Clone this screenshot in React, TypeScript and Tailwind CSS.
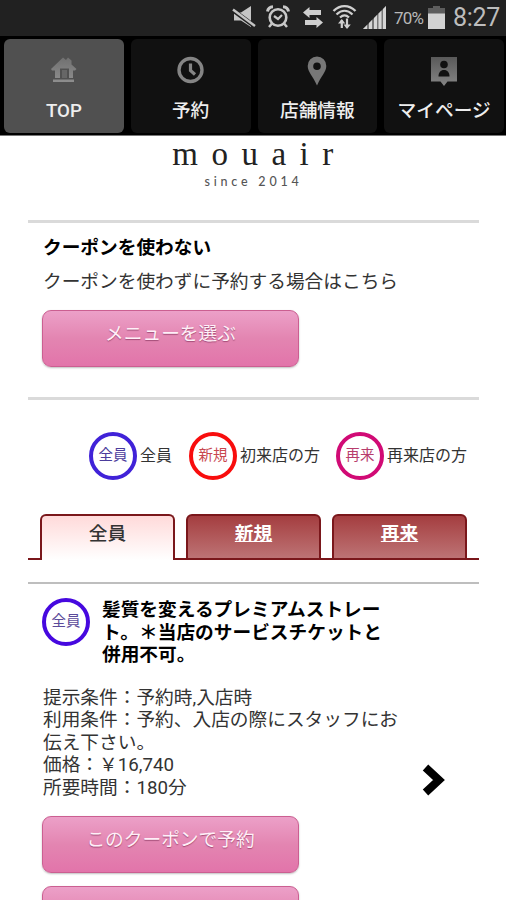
import type { ReactNode } from "react";
import clsx from "clsx";

type NavItemProps = {
  label: string;
  icon: ReactNode;
  active?: boolean;
};

const MuteIcon = () => (
  <svg width="24" height="24" viewBox="0 0 24 24">
    <path d="M2 7.500h7L19 1v21l-10-6.500H2z" fill="#c4c4c4" />
    <path d="M0 4.500l23 17" stroke="#212121" strokeWidth="4.500" />
    <path d="M1 4.500l22 16.500" stroke="#c4c4c4" strokeWidth="2.400" />
  </svg>
);

const AlarmIcon = () => (
  <svg width="24" height="24" viewBox="0 0 24 24" fill="none" stroke="#c8c8c8">
    <circle cx="12" cy="12.500" r="8.300" strokeWidth="2.600" />
    <path d="M8 11l4 3 4-4" strokeWidth="2.200" />
    <path d="M1.500 6.500C2 3.500 4 2 7 1.800M22.500 6.500C22 3.500 20 2 17 1.800" strokeWidth="3" />
    <path d="M6 18.500l-3 3.500M18 18.500l3 3.500" strokeWidth="2.500" />
  </svg>
);

const TransferIcon = () => (
  <svg width="20" height="21" viewBox="0 0 20 21" fill="#cfcfcf">
    <path d="M0 5.500L6.500 0v3H18v5H6.500v3z" />
    <path d="M20 15.500L13.500 10v3H2v5h11.500v3z" />
  </svg>
);

const WifiIcon = () => (
  <svg width="25" height="26" viewBox="0 0 25 26" fill="none" stroke="#cfcfcf">
    <path d="M1.500 7C8 .5 17 .5 23.500 7" strokeWidth="2.400" />
    <path d="M4.500 10.500c5-4.800 11-4.800 16 0" strokeWidth="2.300" />
    <path d="M8 13.500c3-2.800 6-2.800 9 0" strokeWidth="2.300" />
    <path d="M9.800 16v8M15 14.500v9" strokeWidth="2.200" />
    <path d="M6 19.500l3.800-4.500 3.500 4.500zM11.500 20.500l3.500 4.500 3.800-4.500z" fill="#cfcfcf" stroke="none" />
  </svg>
);

const SignalIcon = () => (
  <svg width="23" height="23" viewBox="0 0 23 23">
    <path d="M0 23L23 0v23z" fill="#777" />
    <path d="M0 23l4-4v4zM6 17l3-3v9H6zM11 12l3-3v14h-3zM15.500 7.500l3-3V23h-3zM20 3l3-3v23h-3z" fill="#d5d5d5" />
  </svg>
);

const BatteryIcon = () => (
  <svg width="17" height="23" viewBox="0 0 17 23">
    <path d="M5 0h7v2h5v6H0V2h5z" fill="#5d5d5d" />
    <path d="M0 7.500h17V23H0z" fill="#d2d2d2" />
  </svg>
);

const HomeIcon = () => (
  <svg width="26" height="27" viewBox="0 0 26 27">
    <defs>
      <linearGradient id="home" x1="0" y1="0" x2="0" y2="1">
        <stop offset="0" stopColor="#707070" />
        <stop offset="1" stopColor="#8e8e8e" />
      </linearGradient>
    </defs>
    <path
      d="M0 13L12 1.500l3 2.500 2-2.500 3.500 3v4l5 4.500-1.500 1.500h-2V22H18v-9.500H9V22H4v-7.500H1zM2 23.500h21V26H2z"
      fill="url(#home)"
    />
    <path d="M11 14h5v8h-5z" fill="#666" />
  </svg>
);

const ClockIcon = () => (
  <svg width="28" height="29" viewBox="0 0 28 29" fill="none">
    <circle cx="13.500" cy="14" r="11.500" stroke="#858585" strokeWidth="3.400" />
    <path d="M13.500 7.500v7l4.500 4" stroke="#858585" strokeWidth="3.200" />
  </svg>
);

const PinIcon = () => (
  <svg width="20" height="30" viewBox="0 0 20 30">
    <path
      d="M10 .5a9.300 9.300 0 0 0-9.300 9.500C.7 16 6 20 10 29.500 14 20 19.300 16 19.300 10A9.300 9.300 0 0 0 10 .5zm0 6a3.800 3.800 0 1 1 0 7.600 3.800 3.800 0 0 1 0-7.600z"
      fill="#777"
      fillRule="evenodd"
    />
  </svg>
);

const ProfileIcon = () => (
  <svg width="28" height="30" viewBox="0 0 28 30">
    <defs>
      <linearGradient id="profile" x1="0" y1="0" x2="0" y2="1">
        <stop offset="0" stopColor="#595959" />
        <stop offset="1" stopColor="#858585" />
      </linearGradient>
    </defs>
    <path d="M1 1h26v24.500h-9.500L14 30l-3.500-4.500H1z" fill="url(#profile)" />
    <circle cx="14" cy="8.500" r="3.800" fill="#111" />
    <path d="M8.500 20.500c0-4 2-6.500 5.500-6.500s5.500 2.500 5.500 6.500z" fill="#111" />
  </svg>
);

const StatusBar = () => (
  <div className="flex h-9 items-start bg-[#212121] pl-[232px]">
    <div className="mt-[5px]"><MuteIcon /></div>
    <div className="mt-[5px] ml-[10px]"><AlarmIcon /></div>
    <div className="mt-[7px] ml-[13px]"><TransferIcon /></div>
    <div className="mt-[4px] ml-[9px]"><WifiIcon /></div>
    <div className="mt-[6px] ml-[6px]"><SignalIcon /></div>
    <span className="ml-[8px] w-[30px] font-['Roboto',sans-serif] text-[17px] leading-[37px] tracking-[-0.8px] whitespace-nowrap text-[#b8b8b8]">
      70%
    </span>
    <div className="mt-[6px] ml-[4px]"><BatteryIcon /></div>
    <span className="ml-[8px] font-['Roboto',sans-serif] text-[25px] leading-[35px] tracking-[-0.3px] text-[#bdbdbd]">
      8:27
    </span>
  </div>
);

const NavItem = ({ label, icon, active }: NavItemProps) => (
  <div
    className={clsx(
      "flex h-[94px] flex-col items-center rounded-[6px]",
      active ? "bg-[#505050]" : "bg-[#111]"
    )}
  >
    <div className="flex h-[57px] items-start pt-[17px]">{icon}</div>
    <span className="font-['Roboto','Noto_Sans_CJK_JP',sans-serif] text-[18.7px] leading-[30px] font-medium whitespace-nowrap text-[#eee]">
      {label}
    </span>
  </div>
);

const PinkButton = ({ label }: { label: string }) => (
  <button className="block h-[57px] w-[257px] rounded-[9px] border border-[#cb5f91] bg-linear-to-b from-[#eca0c8] via-[#e385b1] to-[#e274aa] pb-[13px] text-[18.7px] leading-[42px] text-[#fff0f8] shadow-[0_1px_2px_rgba(0,0,0,0.25)] [text-shadow:0_1px_1px_rgba(120,40,80,0.6)]">
    {label}
  </button>
);

const Badge = ({ label, className }: { label: string; className: string }) => (
  <span
    className={clsx(
      "flex h-[48px] w-[48px] shrink-0 justify-center rounded-full border-[4px] text-[14.5px] leading-[36px]",
      className
    )}
  >
    {label}
  </span>
);

const Tab = ({ label, active }: { label: string; active?: boolean }) => (
  <div
    className={clsx(
      "h-[46px] w-[135px] rounded-t-[6px] border-2 border-[#7a171b] text-center text-[18.7px] leading-[32px]",
      active
        ? "border-b-0 bg-linear-to-b from-[#ffdada] to-white font-medium text-[#333]"
        : "bg-linear-to-b from-[#a43d40] to-[#bd7375] font-bold text-white underline"
    )}
  >
    {label}
  </div>
);

const conditions = [
  "提示条件：予約時,入店時",
  "利用条件：予約、入店の際にスタッフにお",
  "伝え下さい。",
  "価格：￥16,740",
  "所要時間：180分",
];

const App = () => {
  return (
    <div className="h-[900px] w-[506px] overflow-hidden bg-white font-['Noto_Sans_CJK_JP',sans-serif] text-[18.7px] text-[#333]">
      <StatusBar />
      <nav className="grid h-[100px] grid-cols-4 gap-[7px] border-b border-[#777] bg-black pt-[3px] pr-[2px] pl-[4px]">
        <NavItem label="TOP" icon={<HomeIcon />} active />
        <NavItem label="予約" icon={<ClockIcon />} />
        <NavItem label="店舗情報" icon={<PinIcon />} />
        <NavItem label="マイページ" icon={<ProfileIcon />} />
      </nav>

      <header className="flex h-[84px] flex-col items-center">
        <div className="mt-[2px] h-[35px] pl-[13px] font-['Liberation_Serif',serif] text-[33px] leading-[33px] tracking-[13.500px] text-[#222]">
          mouair
        </div>
        <div className="pl-[1px] font-['Lato',sans-serif] text-[12.500px] leading-[18px] font-medium tracking-[3.800px] text-[#555]">
          since 2014
        </div>
      </header>

      <main className="mr-[27px] ml-[28px]">
        <section className="h-[180px] border-y-[3px] border-[#dadada] pl-[14px]">
          <h2 className="mt-[10px] pl-px leading-[26px] font-bold text-black">クーポンを使わない</h2>
          <p className="mt-[8px] mb-[17px] pl-px leading-[26px]">クーポンを使わずに予約する場合はこちら</p>
          <PinkButton label="メニューを選ぶ" />
        </section>

        <div className="mt-[32px] flex h-[48px] pl-[61px] text-[16px] leading-[44px] whitespace-nowrap">
          <Badge label="全員" className="border-[#4022d8] text-[#4b3c9c]" />
          <span className="ml-[3px] w-[49px]">全員</span>
          <Badge label="新規" className="border-[#f80d0d] text-[#c8474f]" />
          <span className="ml-[3px] w-[96px]">初来店の方</span>
          <Badge label="再来" className="border-[#d10a75] text-[#b83c6c]" />
          <span className="ml-[3px]">再来店の方</span>
        </div>

        <div className="mt-[34px] flex h-[46px]">
          <div className="w-[12px] border-b-2 border-[#7a171b]" />
          <Tab label="全員" active />
          <div className="w-[11px] border-b-2 border-[#7a171b]" />
          <Tab label="新規" />
          <div className="w-[11px] border-b-2 border-[#7a171b]" />
          <Tab label="再来" />
          <div className="flex-1 border-b-2 border-[#7a171b]" />
        </div>

        <section className="mt-[22px] border-t-2 border-[#bebebe] pl-[14px]">
          <div className="mt-[13px] flex">
            <Badge label="全員" className="mt-px border-[#4608df] text-[#5b4a9a]" />
            <h3 className="ml-[12px] leading-[22.500px] font-bold whitespace-nowrap text-black">
              髪質を変えるプレミアムストレー
              <br />
              ト。＊当店のサービスチケットと
              <br />
              併用不可。
            </h3>
          </div>
          <div className="mt-[22px] flex justify-between pl-px">
            <div className="font-['Roboto','Noto_Sans_CJK_JP',sans-serif] leading-[22.500px] whitespace-nowrap">
              {conditions.map((line) => (
                <p key={line}>{line}</p>
              ))}
            </div>
            <svg className="mt-[77px] mr-[34px]" width="23" height="32" viewBox="0 0 23 32" fill="none">
              <path d="M3.500 3.500L17 16 3.500 28.500" stroke="#000" strokeWidth="8" />
            </svg>
          </div>
          <div className="mt-[17px] flex flex-col gap-[13px]">
            <PinkButton label="このクーポンで予約" />
            <PinkButton label="" />
          </div>
        </section>
      </main>
    </div>
  );
};

export default App;
